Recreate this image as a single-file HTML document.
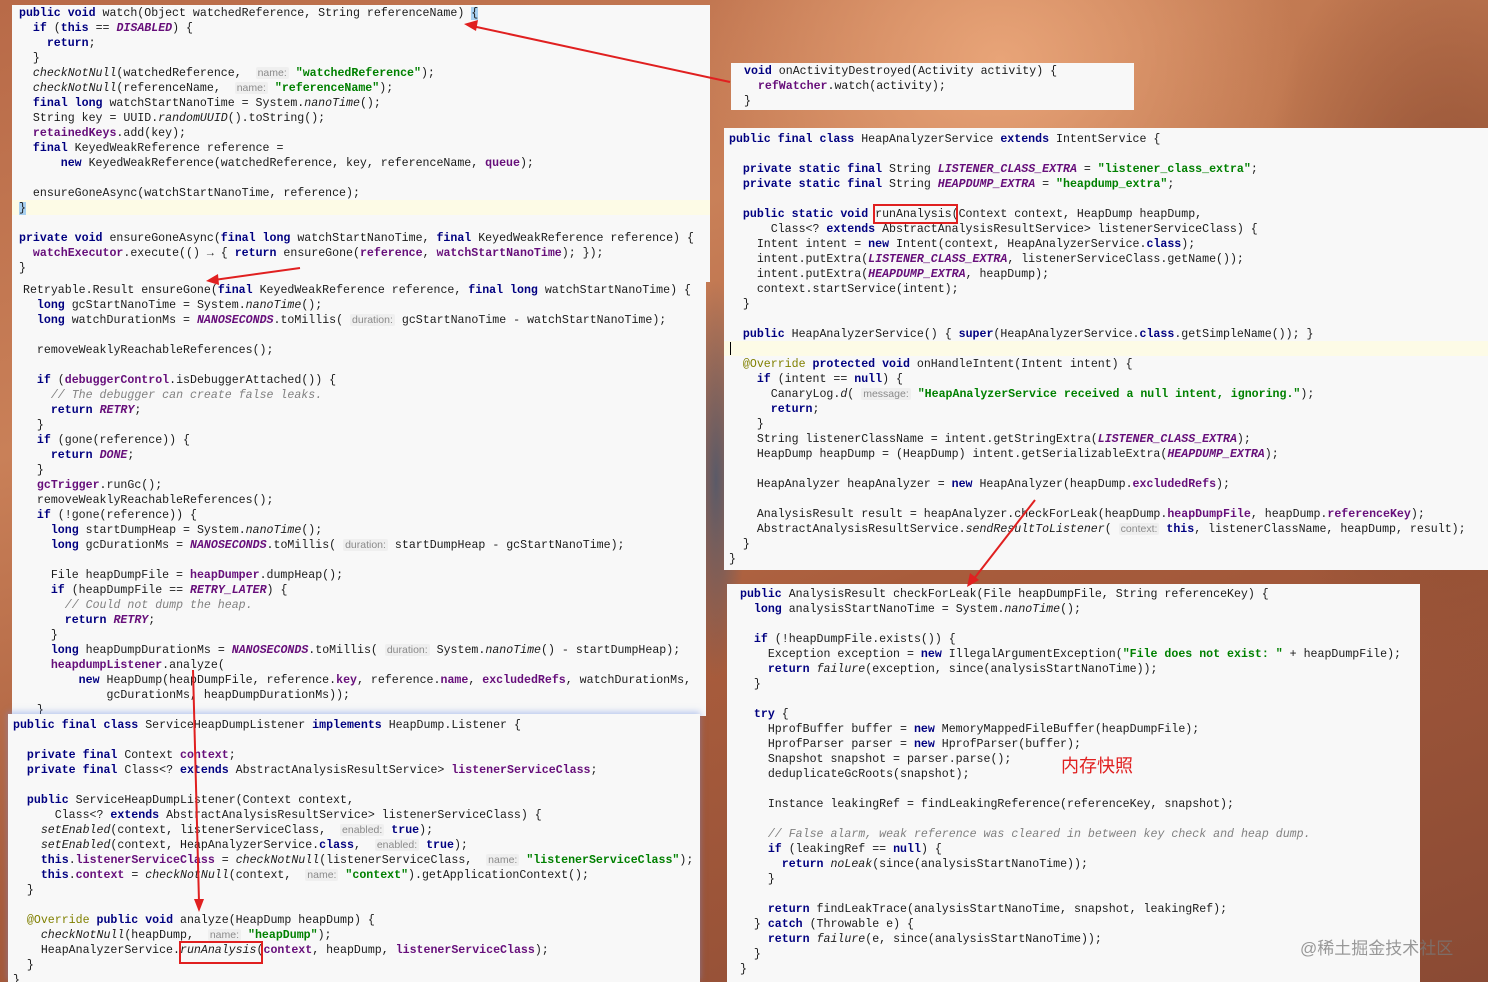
<!DOCTYPE html>
<html><head><meta charset="utf-8"><style>
*{margin:0;padding:0;box-sizing:border-box}
body{width:1488px;height:982px;overflow:hidden;position:relative;
background:
radial-gradient(ellipse 300px 250px at 1000px 60px,#e8a478 0%,rgba(232,164,120,0) 100%),
radial-gradient(ellipse 200px 400px at 1450px 300px,#8a4a30 0%,rgba(138,74,48,0) 100%),
radial-gradient(ellipse 300px 300px at 1300px 100px,#c07850 0%,rgba(192,120,80,0) 100%),
radial-gradient(ellipse 30px 200px at 716px 480px,#5a5a68 0%,rgba(90,90,104,0) 100%),
linear-gradient(160deg,#b86a48 0%,#c98058 30%,#a85c3c 60%,#8a4a34 100%);}
.p{position:absolute;background:#f8f8f8;overflow:hidden}
pre{font-family:"Liberation Mono",monospace;font-size:11.6px;line-height:15px;color:#1a1a1a;white-space:pre;position:absolute}
.k{color:#000080;font-weight:bold}
.f{color:#660e7a;font-weight:bold}
.fi{color:#660e7a;font-weight:bold;font-style:italic}
.s{color:#008000;font-weight:bold}
.i{font-style:italic}
.c{color:#808080;font-style:italic}
.a{color:#808000}
.h{font-family:"Liberation Sans",sans-serif;font-size:10.5px;color:#8a8a8a;background:#efefef;padding:0 2px;border-radius:2px}
.rb{position:absolute;border:2px solid #e02020}
</style></head><body>

<div class="p" style="left:12px;top:5px;width:698px;height:277px">
<div style="position:absolute;left:0;top:195px;width:698px;height:15px;background:#fdfbe6"></div>
<pre style="left:7px;top:1px"><span class="k">public void</span> watch(Object watchedReference, String referenceName) <span style="background:#a8d0f0">{</span>
  <span class="k">if</span> (<span class="k">this</span> == <span class="fi">DISABLED</span>) {
    <span class="k">return</span>;
  }
  <span class="i">checkNotNull</span>(watchedReference,  <span class="h">name:</span> <span class="s">"watchedReference"</span>);
  <span class="i">checkNotNull</span>(referenceName,  <span class="h">name:</span> <span class="s">"referenceName"</span>);
  <span class="k">final long</span> watchStartNanoTime = System.<span class="i">nanoTime</span>();
  String key = UUID.<span class="i">randomUUID</span>().toString();
  <span class="f">retainedKeys</span>.add(key);
  <span class="k">final</span> KeyedWeakReference reference =
      <span class="k">new</span> KeyedWeakReference(watchedReference, key, referenceName, <span class="f">queue</span>);

  ensureGoneAsync(watchStartNanoTime, reference);
<span style="background:#a8d0f0">}</span>

<span class="k">private void</span> ensureGoneAsync(<span class="k">final long</span> watchStartNanoTime, <span class="k">final</span> KeyedWeakReference reference) {
  <span class="f">watchExecutor</span>.execute(() → { <span class="k">return</span> ensureGone(<span class="f">reference</span>, <span class="f">watchStartNanoTime</span>); });
}</pre></div>

<div class="p" style="left:12px;top:282px;width:694px;height:434px">
<pre style="left:11px;top:1px"><span>Retryable.Result ensureGone(<span class="k">final</span> KeyedWeakReference reference, <span class="k">final long</span> watchStartNanoTime) {</span>
  <span class="k">long</span> gcStartNanoTime = System.<span class="i">nanoTime</span>();
  <span class="k">long</span> watchDurationMs = <span class="fi">NANOSECONDS</span>.toMillis( <span class="h">duration:</span> gcStartNanoTime - watchStartNanoTime);

  removeWeaklyReachableReferences();

  <span class="k">if</span> (<span class="f">debuggerControl</span>.isDebuggerAttached()) {
    <span class="c">// The debugger can create false leaks.</span>
    <span class="k">return</span> <span class="fi">RETRY</span>;
  }
  <span class="k">if</span> (gone(reference)) {
    <span class="k">return</span> <span class="fi">DONE</span>;
  }
  <span class="f">gcTrigger</span>.runGc();
  removeWeaklyReachableReferences();
  <span class="k">if</span> (!gone(reference)) {
    <span class="k">long</span> startDumpHeap = System.<span class="i">nanoTime</span>();
    <span class="k">long</span> gcDurationMs = <span class="fi">NANOSECONDS</span>.toMillis( <span class="h">duration:</span> startDumpHeap - gcStartNanoTime);

    File heapDumpFile = <span class="f">heapDumper</span>.dumpHeap();
    <span class="k">if</span> (heapDumpFile == <span class="fi">RETRY_LATER</span>) {
      <span class="c">// Could not dump the heap.</span>
      <span class="k">return</span> <span class="fi">RETRY</span>;
    }
    <span class="k">long</span> heapDumpDurationMs = <span class="fi">NANOSECONDS</span>.toMillis( <span class="h">duration:</span> System.<span class="i">nanoTime</span>() - startDumpHeap);
    <span class="f">heapdumpListener</span>.analyze(
        <span class="k">new</span> HeapDump(heapDumpFile, reference.<span class="f">key</span>, reference.<span class="f">name</span>, <span class="f">excludedRefs</span>, watchDurationMs,
            gcDurationMs, heapDumpDurationMs));
  }</pre></div>

<div class="p" style="left:8px;top:714px;width:692px;height:268px;box-shadow:0 -2px 6px rgba(120,150,230,.5)">
<pre style="left:5px;top:4px"><span class="k">public final class</span> ServiceHeapDumpListener <span class="k">implements</span> HeapDump.Listener {

  <span class="k">private final</span> Context <span class="f">context</span>;
  <span class="k">private final</span> Class&lt;? <span class="k">extends</span> AbstractAnalysisResultService&gt; <span class="f">listenerServiceClass</span>;

  <span class="k">public</span> ServiceHeapDumpListener(Context context,
      Class&lt;? <span class="k">extends</span> AbstractAnalysisResultService&gt; listenerServiceClass) {
    <span class="i">setEnabled</span>(context, listenerServiceClass,  <span class="h">enabled:</span> <span class="k">true</span>);
    <span class="i">setEnabled</span>(context, HeapAnalyzerService.<span class="k">class</span>,  <span class="h">enabled:</span> <span class="k">true</span>);
    <span class="k">this</span>.<span class="f">listenerServiceClass</span> = <span class="i">checkNotNull</span>(listenerServiceClass,  <span class="h">name:</span> <span class="s">"listenerServiceClass"</span>);
    <span class="k">this</span>.<span class="f">context</span> = <span class="i">checkNotNull</span>(context,  <span class="h">name:</span> <span class="s">"context"</span>).getApplicationContext();
  }

  <span class="a">@Override</span> <span class="k">public void</span> analyze(HeapDump heapDump) {
    <span class="i">checkNotNull</span>(heapDump,  <span class="h">name:</span> <span class="s">"heapDump"</span>);
    HeapAnalyzerService.<span class="i">runAnalysis</span>(<span class="f">context</span>, heapDump, <span class="f">listenerServiceClass</span>);
  }
}</pre></div>

<div class="p" style="left:731px;top:63px;width:403px;height:47px">
<pre style="left:13px;top:1px"><span class="k">void</span> onActivityDestroyed(Activity activity) {
  <span class="f">refWatcher</span>.watch(activity);
}</pre></div>

<div class="p" style="left:724px;top:128px;width:764px;height:442px">
<div style="position:absolute;left:0;top:213px;width:764px;height:15px;background:#fdfbe6"></div>
<div style="position:absolute;left:6px;top:214px;width:1px;height:13px;background:#000"></div>
<pre style="left:5px;top:4px"><span class="k">public final class</span> HeapAnalyzerService <span class="k">extends</span> IntentService {

  <span class="k">private static final</span> String <span class="fi">LISTENER_CLASS_EXTRA</span> = <span class="s">"listener_class_extra"</span>;
  <span class="k">private static final</span> String <span class="fi">HEAPDUMP_EXTRA</span> = <span class="s">"heapdump_extra"</span>;

  <span class="k">public static void</span> runAnalysis(Context context, HeapDump heapDump,
      Class&lt;? <span class="k">extends</span> AbstractAnalysisResultService&gt; listenerServiceClass) {
    Intent intent = <span class="k">new</span> Intent(context, HeapAnalyzerService.<span class="k">class</span>);
    intent.putExtra(<span class="fi">LISTENER_CLASS_EXTRA</span>, listenerServiceClass.getName());
    intent.putExtra(<span class="fi">HEAPDUMP_EXTRA</span>, heapDump);
    context.startService(intent);
  }

  <span class="k">public</span> HeapAnalyzerService() { <span class="k">super</span>(HeapAnalyzerService.<span class="k">class</span>.getSimpleName()); }

  <span class="a">@Override</span> <span class="k">protected void</span> onHandleIntent(Intent intent) {
    <span class="k">if</span> (intent == <span class="k">null</span>) {
      CanaryLog.<span class="i">d</span>( <span class="h">message:</span> <span class="s">"HeapAnalyzerService received a null intent, ignoring."</span>);
      <span class="k">return</span>;
    }
    String listenerClassName = intent.getStringExtra(<span class="fi">LISTENER_CLASS_EXTRA</span>);
    HeapDump heapDump = (HeapDump) intent.getSerializableExtra(<span class="fi">HEAPDUMP_EXTRA</span>);

    HeapAnalyzer heapAnalyzer = <span class="k">new</span> HeapAnalyzer(heapDump.<span class="f">excludedRefs</span>);

    AnalysisResult result = heapAnalyzer.checkForLeak(heapDump.<span class="f">heapDumpFile</span>, heapDump.<span class="f">referenceKey</span>);
    AbstractAnalysisResultService.<span class="i">sendResultToListener</span>( <span class="h">context:</span> <span class="k">this</span>, listenerClassName, heapDump, result);
  }
}</pre></div>

<div class="p" style="left:727px;top:584px;width:693px;height:398px">
<pre style="left:13px;top:3px"><span class="k">public</span> AnalysisResult checkForLeak(File heapDumpFile, String referenceKey) {
  <span class="k">long</span> analysisStartNanoTime = System.<span class="i">nanoTime</span>();

  <span class="k">if</span> (!heapDumpFile.exists()) {
    Exception exception = <span class="k">new</span> IllegalArgumentException(<span class="s">"File does not exist: "</span> + heapDumpFile);
    <span class="k">return</span> <span class="i">failure</span>(exception, since(analysisStartNanoTime));
  }

  <span class="k">try</span> {
    HprofBuffer buffer = <span class="k">new</span> MemoryMappedFileBuffer(heapDumpFile);
    HprofParser parser = <span class="k">new</span> HprofParser(buffer);
    Snapshot snapshot = parser.parse();
    deduplicateGcRoots(snapshot);

    Instance leakingRef = findLeakingReference(referenceKey, snapshot);

    <span class="c">// False alarm, weak reference was cleared in between key check and heap dump.</span>
    <span class="k">if</span> (leakingRef == <span class="k">null</span>) {
      <span class="k">return</span> <span class="i">noLeak</span>(since(analysisStartNanoTime));
    }

    <span class="k">return</span> findLeakTrace(analysisStartNanoTime, snapshot, leakingRef);
  } <span class="k">catch</span> (Throwable e) {
    <span class="k">return</span> <span class="i">failure</span>(e, since(analysisStartNanoTime));
  }
}</pre>
<div style="position:absolute;left:334px;top:168px;font-family:'Liberation Sans','Noto Sans CJK SC',sans-serif;font-size:18px;color:#e02020">内存快照</div>
</div>

<div style="position:absolute;left:1300px;top:934px;font-family:'Liberation Sans','Noto Sans CJK SC',sans-serif;font-size:17px;color:rgba(120,120,120,.75)">@稀土掘金技术社区</div>

<div class="rb" style="left:873px;top:204px;width:85px;height:20px"></div>
<div class="rb" style="left:179px;top:941px;width:84px;height:23px"></div>

<svg width="1488" height="982" style="position:absolute;left:0;top:0" fill="none" stroke="#e02020" stroke-width="2">
<line x1="730" y1="82" x2="472" y2="26"/><polygon points="464,24 478,20 476,31" fill="#e02020" stroke="none"/>
<line x1="300" y1="268" x2="214" y2="280"/><polygon points="206,281 218,274 219,285" fill="#e02020" stroke="none"/>
<line x1="193" y1="670" x2="199" y2="902"/><polygon points="199,912 194,899 204,899" fill="#e02020" stroke="none"/>
<line x1="1035" y1="500" x2="973" y2="580"/><polygon points="967,587 970,573 979,580" fill="#e02020" stroke="none"/>
</svg>
</body></html>
